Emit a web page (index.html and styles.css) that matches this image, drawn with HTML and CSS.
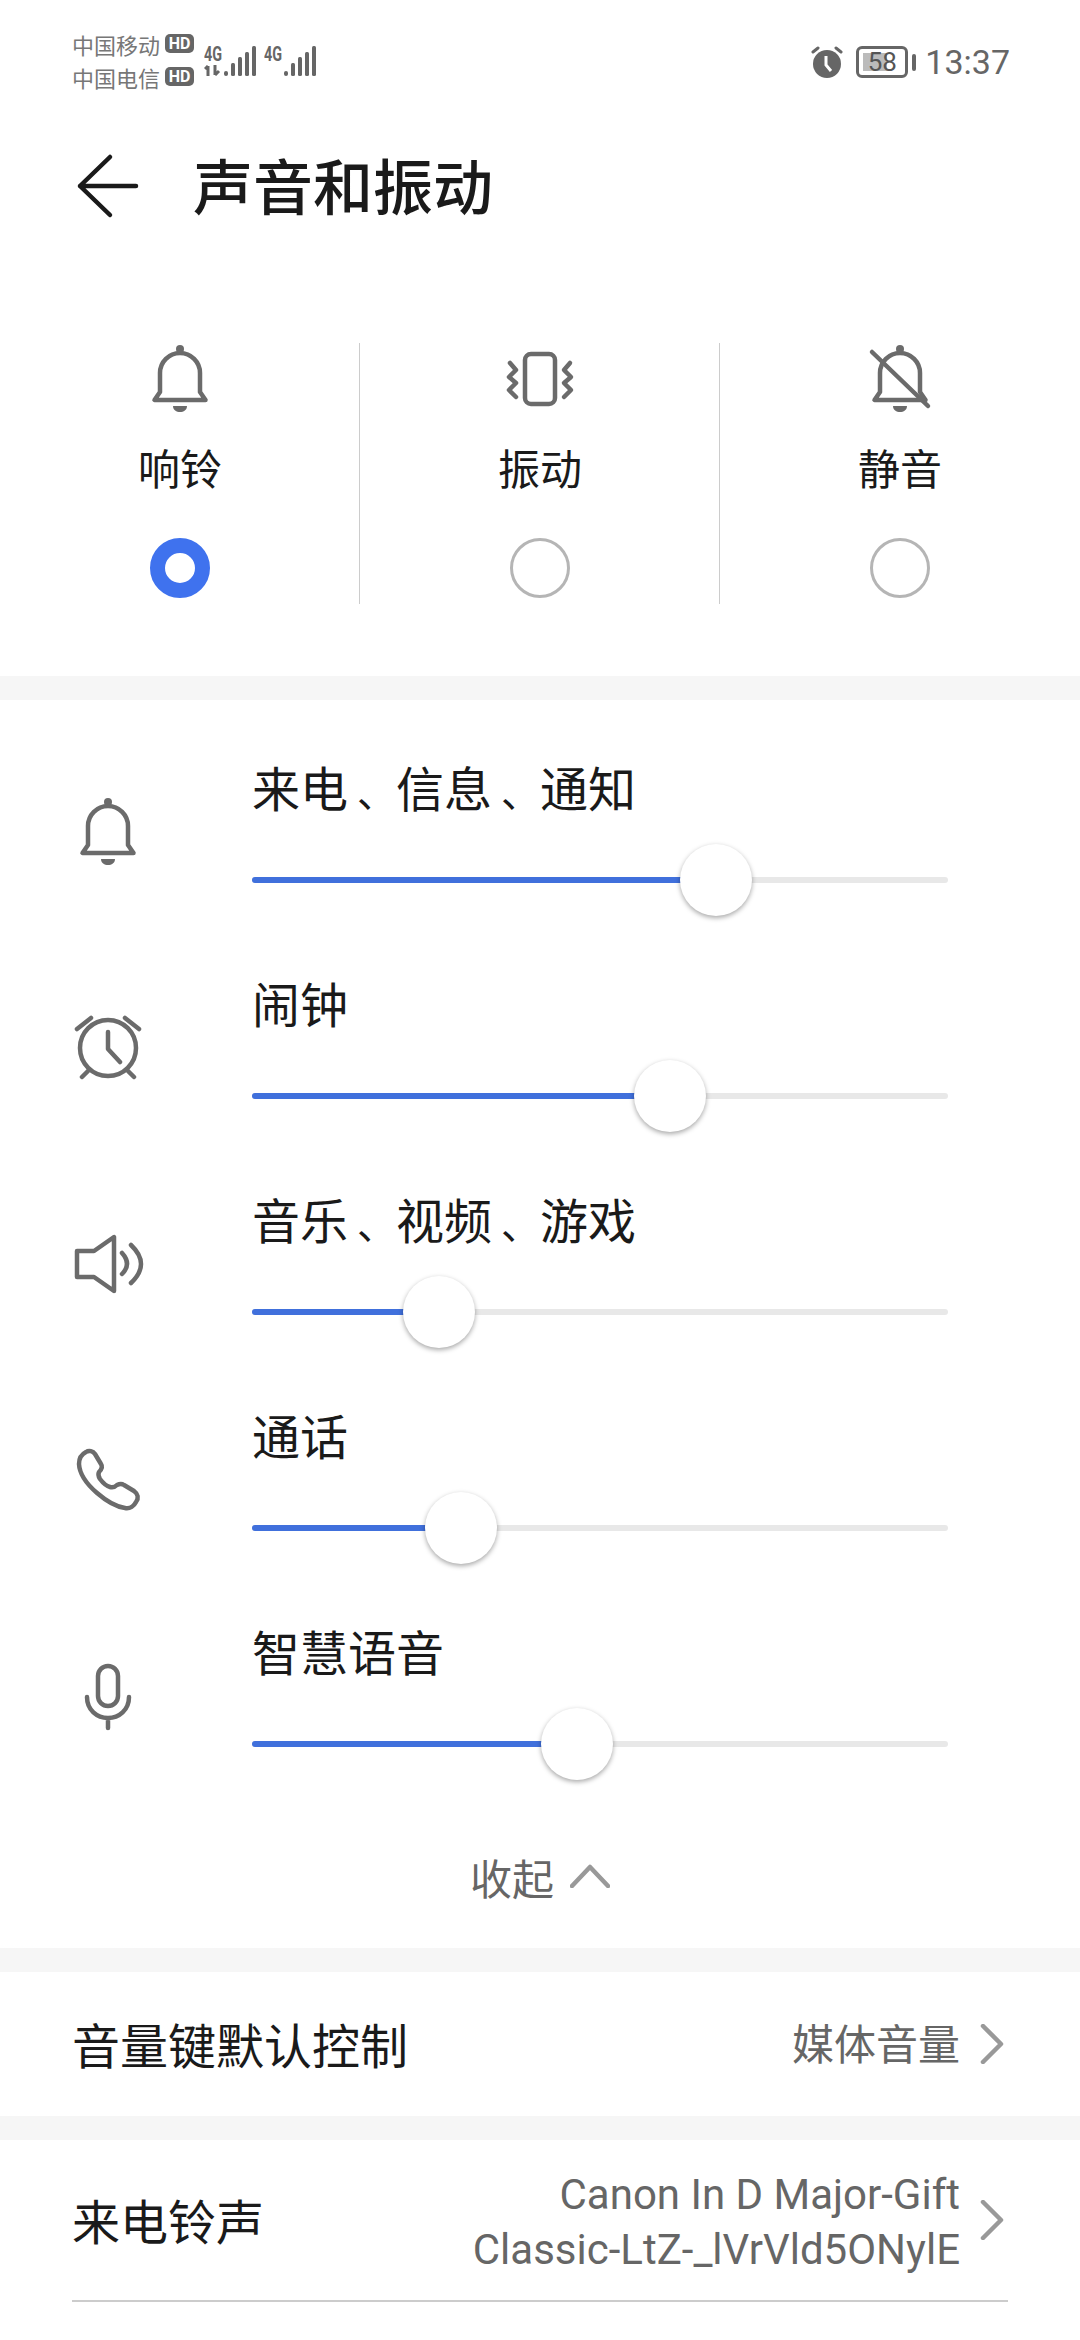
FILE: index.html
```html
<!DOCTYPE html>
<html lang="zh-CN">
<head>
  <meta charset="UTF-8" />
  <meta name="viewport" content="width=device-width, initial-scale=1.0" />
  <title>声音和振动</title>
  <link rel="stylesheet" href="styles.css">
</head>
<body>
  <svg class="defs" width="0" height="0">
    <symbol id="bell" viewBox="0 0 72 72">
      <path d="M10.500 57H61.500L56 49V30C56 19 47 10 36 10C25 10 16 19 16 30V49Z" />
      <circle class="solid" cx="36" cy="6" r="4" />
      <path class="solid" d="M29 63H43C43 71 29 71 29 63Z" />
    </symbol>
  </svg>

  <div class="status">
    <div class="carriers">
      <div class="carrier">中国移动<span class="hd">HD</span></div>
      <div class="carrier">中国电信<span class="hd">HD</span></div>
    </div>
    <div class="sim">
      <div class="net">
        <span class="net-name">4G</span>
        <svg class="net-arrows" width="18" height="11" viewBox="0 0 18 11">
          <path d="M4 1V11M1 4L4 1" />
          <path d="M11 0V10M11 10L15 6" />
        </svg>
      </div>
      <svg class="bars" width="32" height="30" viewBox="0 0 32 30">
        <rect x="0" y="25" width="4" height="5" rx="2" />
        <rect x="7" y="17" width="4" height="13" rx="1.500" />
        <rect x="14" y="11" width="4" height="19" rx="1.500" />
        <rect x="21" y="6" width="4" height="24" rx="1.500" />
        <rect x="28" y="0" width="4" height="30" rx="1.500" />
      </svg>
    </div>
    <div class="sim">
      <div class="net">
        <span class="net-name">4G</span>
        <svg class="net-arrows" width="18" height="11" viewBox="0 0 18 11"></svg>
      </div>
      <svg class="bars" width="32" height="30" viewBox="0 0 32 30">
        <rect x="0" y="25" width="4" height="5" rx="2" />
        <rect x="7" y="17" width="4" height="13" rx="1.500" />
        <rect x="14" y="11" width="4" height="19" rx="1.500" />
        <rect x="21" y="6" width="4" height="24" rx="1.500" />
        <rect x="28" y="0" width="4" height="30" rx="1.500" />
      </svg>
    </div>
    <div class="status-right">
      <svg class="status-alarm" width="32" height="32" viewBox="0 0 32 32">
        <circle cx="16" cy="18" r="14" fill="#666" />
        <path d="M2 6L7 2M30 6L25 2" stroke="#666" stroke-width="3" stroke-linecap="round" fill="none" />
        <path d="M15 10V19L20 25" stroke="#fff" stroke-width="3" fill="none" />
      </svg>
      <div class="battery"><span class="battery-level">58</span></div>
      <span class="battery-nub"></span>
      <span class="time">13:37</span>
    </div>
  </div>

  <div class="header">
    <svg class="back" width="72" height="72" viewBox="0 0 72 72">
      <path d="M38 7L8 36L38 65M8 36H64" />
    </svg>
    <h1>声音和振动</h1>
  </div>

  <div class="modes">
    <div class="mode">
      <svg class="icon" width="72" height="72"><use href="#bell" /></svg>
      <div class="mode-name">响铃</div>
      <span class="radio checked"></span>
    </div>
    <div class="mode">
      <svg class="icon" width="72" height="72" viewBox="0 0 72 72">
        <rect x="21" y="11" width="30" height="50" rx="6" />
        <path d="M6 20L12 27L5 34L12 40L5 47L12 54" />
        <path d="M66 20L60 27L67 34L60 40L67 47L60 54" />
      </svg>
      <div class="mode-name">振动</div>
      <span class="radio"></span>
    </div>
    <div class="mode">
      <svg class="icon" width="72" height="72" viewBox="0 0 72 72">
        <use href="#bell" width="72" height="72" />
        <path d="M8 9L64 63" />
      </svg>
      <div class="mode-name">静音</div>
      <span class="radio"></span>
    </div>
  </div>

  <div class="band"></div>

  <div class="volumes">
    <div class="vol">
      <svg class="icon vol-icon" width="72" height="72"><use href="#bell" /></svg>
      <div class="vol-body">
        <div class="vol-name">来电<span class="dun">、</span>信息<span class="dun">、</span>通知</div>
        <div class="track"><span class="fill" style="width: 66.7%"></span><span class="thumb"></span></div>
      </div>
    </div>
    <div class="vol">
      <svg class="icon vol-icon" width="72" height="72" viewBox="0 0 72 72">
        <circle cx="36" cy="36" r="28" />
        <path d="M5 17L19 6M67 17L53 6M10 65L16 59M62 65L56 59M36 20V37L48 50" />
      </svg>
      <div class="vol-body">
        <div class="vol-name">闹钟</div>
        <div class="track"><span class="fill" style="width: 60%"></span><span class="thumb"></span></div>
      </div>
    </div>
    <div class="vol">
      <svg class="icon vol-icon" width="72" height="72" viewBox="0 0 72 72">
        <path d="M5 23H22L42 9V63L22 49H5Z" />
        <path d="M50 25Q60 36 50 46M59 17Q79 36 59 55" />
      </svg>
      <div class="vol-body">
        <div class="vol-name">音乐<span class="dun">、</span>视频<span class="dun">、</span>游戏</div>
        <div class="track"><span class="fill" style="width: 26.8%"></span><span class="thumb"></span></div>
      </div>
    </div>
    <div class="vol">
      <svg class="icon vol-icon" width="72" height="72" viewBox="0 0 72 72">
        <path d="M14 8C17 6 21 7 23 10L29 20C31 23 29 26 27 28C26 30 26 32 28 35C31 39 34 42 38 43C41 44 43 43 45 41C47 40 49 39 52 41L62 47C66 50 67 54 64 58C62 62 58 65 53 64C38 62 8 40 7 20C7 14 10 10 14 8Z" />
      </svg>
      <div class="vol-body">
        <div class="vol-name">通话</div>
        <div class="track"><span class="fill" style="width: 30%"></span><span class="thumb"></span></div>
      </div>
    </div>
    <div class="vol">
      <svg class="icon vol-icon" width="72" height="72" viewBox="0 0 72 72">
        <rect x="26" y="6" width="20" height="40" rx="10" />
        <path d="M15 37C15 50 25 58 36 58C47 58 57 50 57 37M36 58V68" />
      </svg>
      <div class="vol-body">
        <div class="vol-name">智慧语音</div>
        <div class="track"><span class="fill" style="width: 46.7%"></span><span class="thumb"></span></div>
      </div>
    </div>
    <div class="collapse">
      <span>收起</span>
      <svg class="chevron-up" width="40" height="24" viewBox="0 0 40 24">
        <path d="M2 22L20 3L38 22" />
      </svg>
    </div>
  </div>

  <div class="band"></div>

  <div class="row row-key">
    <span class="row-name">音量键默认控制</span>
    <span class="row-value">媒体音量</span>
    <svg class="chevron" width="24" height="40" viewBox="0 0 24 40">
      <path d="M3 2L21 20L3 38" />
    </svg>
  </div>

  <div class="band"></div>

  <div class="row row-tone">
    <span class="row-name">来电铃声</span>
    <span class="row-value">Canon In D Major-Gift<br>Classic-LtZ-_lVrVld5ONylE</span>
    <svg class="chevron" width="24" height="40" viewBox="0 0 24 40">
      <path d="M3 2L21 20L3 38" />
    </svg>
  </div>
</body>
</html>
```

FILE: styles.css
```css
body {
  margin: 0;
  width: 1080px;
  height: 2340px;
  overflow: hidden;
  background: #fff;
  color: #1a1a1a;
  font-family: Roboto, "Noto Sans CJK SC", sans-serif;
}
.defs {
  display: block;
  height: 0;
}
.status {
  display: flex;
  box-sizing: border-box;
  height: 96px;
  padding: 27px 70px 0 72px;
  color: #666;
}
.carrier {
  display: flex;
  align-items: center;
  height: 33px;
  font-size: 22px;
  color: #777;
}
.hd {
  width: 29px;
  height: 19px;
  margin-left: 5px;
  background: #666;
  border-radius: 5px;
  color: #fff;
  font-size: 16px;
  font-weight: 700;
  line-height: 19px;
  text-align: center;
}
.sim {
  display: flex;
  align-items: flex-end;
  height: 30px;
  margin-left: 10px;
  padding-top: 19px;
}
.sim + .sim {
  margin-left: 8px;
}
.net {
  width: 19px;
}
.net-name {
  display: block;
  height: 20px;
  font-size: 20px;
  font-weight: 700;
  line-height: 18px;
  transform: scaleX(0.72);
  transform-origin: left;
}
.net-arrows {
  display: block;
  fill: none;
  stroke: #666;
  stroke-width: 3;
}
.bars {
  fill: #666;
  margin-left: 1px;
}
.status-right {
  display: flex;
  align-items: center;
  height: 34px;
  margin-left: auto;
  margin-top: 18px;
}
.status-alarm {
  margin-right: 13px;
}
.battery {
  box-sizing: border-box;
  width: 52px;
  height: 32px;
  padding: 4px;
  border: 3px solid #666;
  border-radius: 6px;
}
.battery-level {
  display: block;
  height: 18px;
  background: linear-gradient(90deg, #bbb 62%, transparent 62%);
  color: #555;
  font-size: 26px;
  line-height: 18px;
  text-align: center;
}
.battery-nub {
  width: 4px;
  height: 17px;
  margin-left: 4px;
  background: #666;
  border-radius: 2px;
}
.time {
  margin-left: 9px;
  font-size: 34px;
}
.header {
  display: flex;
  align-items: center;
  height: 182px;
  padding-left: 72px;
}
.back {
  margin-bottom: 2px;
  fill: none;
  stroke: #1a1a1a;
  stroke-width: 4.500;
  stroke-linecap: round;
  stroke-linejoin: round;
}
h1 {
  margin: 0 0 8px 49px;
  font-size: 60px;
  font-weight: 500;
}
.icon {
  display: block;
  fill: none;
  stroke: #6b6b6b;
  stroke-width: 4.500;
  stroke-linecap: round;
  stroke-linejoin: round;
  flex-shrink: 0;
}
.solid {
  fill: #6b6b6b;
  stroke: none;
}
.modes {
  display: grid;
  grid-template-columns: repeat(3, 360px);
  padding: 65px 0 72px;
}
.mode {
  display: flex;
  flex-direction: column;
  align-items: center;
  height: 261px;
}
.mode + .mode {
  box-shadow: -1px 0 0 #ccc;
}
.mode-name {
  margin-top: 26px;
  font-size: 42px;
  line-height: 60px;
}
.radio {
  box-sizing: border-box;
  width: 60px;
  height: 60px;
  margin-top: 37px;
  border: 3px solid #b5b5b5;
  border-radius: 50%;
}
.radio.checked {
  border: 15px solid #3f72ee;
}
.band {
  height: 24px;
  background: #f6f6f6;
}
.volumes {
  padding-top: 18px;
}
.vol {
  display: flex;
  height: 216px;
  padding-left: 72px;
}
.vol-icon {
  margin-top: 78px;
}
.vol-body {
  width: 696px;
  margin-left: 108px;
  padding-top: 37px;
}
.vol-name {
  height: 72px;
  font-size: 48px;
  line-height: 72px;
}
.dun {
  display: inline-block;
  padding-left: 9px;
  font-size: 39px;
}
.track {
  position: relative;
  height: 6px;
  margin-top: 50px;
  background: #e8e8e8;
  border-radius: 3px;
}
.fill {
  float: left;
  height: 100%;
  background: #4070dc;
  border-radius: 3px;
}
.thumb {
  position: relative;
  float: left;
  top: -33px;
  width: 72px;
  height: 72px;
  margin-left: -36px;
  background: #fff;
  border-radius: 50%;
  box-shadow: 0 2px 5px rgba(0, 0, 0, 0.35);
}
.collapse {
  display: flex;
  align-items: center;
  justify-content: center;
  box-sizing: border-box;
  height: 150px;
  padding: 6px 0 0 0;
  color: #666;
  font-size: 42px;
}
.chevron-up {
  margin-left: 16px;
  fill: none;
  stroke: #999;
  stroke-width: 4.500;
  stroke-linecap: round;
  stroke-linejoin: round;
}
.row {
  display: flex;
  align-items: center;
  box-sizing: border-box;
  margin: 0 72px;
}
.row-key {
  height: 144px;
}
.row-tone {
  height: 162px;
  border-bottom: 2px solid #ccc;
}
.row-name {
  margin-right: auto;
  margin-bottom: 3px;
  font-size: 48px;
}
.row-value {
  padding-top: 3px;
  color: #666;
  font-size: 42px;
  line-height: 55px;
  text-align: right;
}
.chevron {
  margin: 0 4px 0 20px;
  fill: none;
  stroke: #999;
  stroke-width: 4.500;
  stroke-linecap: round;
  stroke-linejoin: round;
}
```
